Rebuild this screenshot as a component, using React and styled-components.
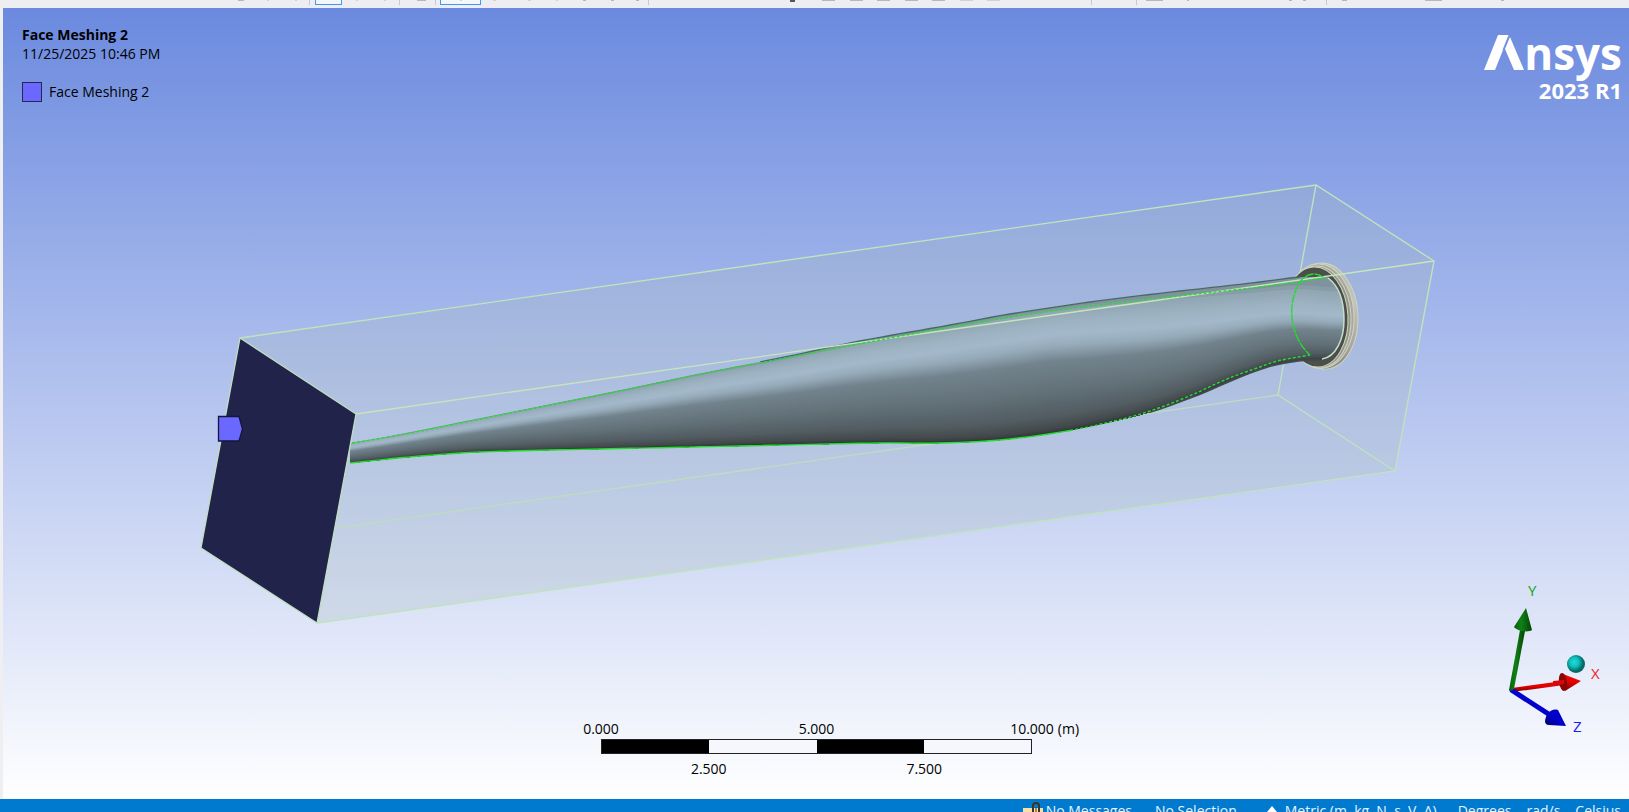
import React from "react";
import styled, { createGlobalStyle } from "styled-components";

const GlobalStyle = createGlobalStyle`
  * { box-sizing: border-box; }
  body { margin: 0; overflow: hidden; background: #efeff2; }
  body, button { font-family: "Open Sans", "Noto Sans", sans-serif; font-size: 14px; line-height: 20px; }
`;

const Window = styled.div`
  height: 100vh;
  display: flex;
  flex-direction: column;
`;

/* ---------- toolbar ---------- */

const Toolbar = styled.div`
  display: flex;
  flex: none;
  height: 8px;
  overflow: hidden;
  background: #eeeef2;
`;

const ToolButton = styled.button`
  flex: none;
  display: flex;
  justify-content: center;
  align-items: flex-start;
  width: ${(p) => p.$width}px;
  height: 5px;
  margin: 0 0 0 ${(p) => p.$gap || 0}px;
  padding: 0;
  border: ${(p) => (p.$active ? "1px solid #3d9bf7" : "0")};
  border-top: 0;
  background: ${(p) => (p.$active ? "#f3f6fb" : "transparent")};
`;

const Glyph = styled.span`
  width: ${(p) => p.$width}px;
  height: ${(p) => (p.$dark ? 2 : 1)}px;
  background: ${(p) => (p.$dark ? "#55555b" : p.$faint ? "#d0d0d5" : "#b7b7bd")};
`;

const Separator = styled.span`
  flex: none;
  width: 1px;
  height: 5px;
  margin-left: ${(p) => p.$gap || 0}px;
  background: #c6c8d4;
`;

const tools = [
  { name: "Select", gap: 227, w: 27, mark: 6 },
  { name: "Mode", w: 28, mark: 2, faint: true },
  { name: "Clipboard", w: 27, mark: 2, faint: true },
  { sep: true },
  { name: "Vertex", gap: 5, w: 27, active: true },
  { name: "Edge", w: 29, mark: 2, faint: true },
  { name: "Face", w: 28, mark: 2, faint: true },
  { sep: true },
  { name: "Body", gap: 8, w: 27, mark: 9 },
  { sep: true },
  { name: "Extend", gap: 4, w: 41, active: true, mark: 2, faint: true },
  { name: "Node", w: 27, mark: 3, faint: true },
  { name: "Element", gap: 8, w: 27, mark: 3, faint: true },
  { name: "Rotate", w: 27, mark: 2, faint: true },
  { name: "Pan", w: 28, mark: 3 },
  { name: "Zoom", w: 28, mark: 3 },
  { name: "Box Zoom", w: 22, mark: 3 },
  { sep: true },
  { name: "Fit", gap: 131, w: 24, mark: 5, dark: true },
  { name: "Look At", gap: 11, w: 27, mark: 13 },
  { name: "Front", w: 28, mark: 13 },
  { name: "Back", w: 27, mark: 13 },
  { name: "Left", w: 28, mark: 13 },
  { name: "Right", w: 27, mark: 13 },
  { name: "Top", w: 28, mark: 13, faint: true },
  { name: "Bottom", w: 27, mark: 13, faint: true },
  { sep: true, gap: 84 },
  { sep: true, gap: 44 },
  { name: "Section", gap: 4, w: 27, mark: 17 },
  { name: "Views", gap: 6, w: 27, mark: 2 },
  { name: "Probe", gap: 82, w: 14, mark: 3 },
  { name: "Label", w: 14, mark: 3 },
  { sep: true, gap: 15 },
  { name: "Triad", gap: 4, w: 27, mark: 5 },
  { name: "Legend", gap: 62, w: 27, mark: 17 },
  { name: "Ruler", gap: 42, w: 27, mark: 3 },
  { name: "More", gap: 108, w: 16, mark: 3, dark: true },
];

/* ---------- 3D view ---------- */

const Viewport = styled.main`
  position: relative;
  flex: 1;
  min-height: 0;
  margin-left: 3px;
  overflow: hidden;
  background: linear-gradient(#6b8adf, #ffffff);
  color: #000;
`;

const Scene = styled.svg`
  display: block;
  width: 100%;
  height: 100%;
`;

const Annotation = styled.header`
  position: absolute;
  top: 17px;
  left: 19px;
`;

const Title = styled.h1`
  margin: 0;
  font-size: 14px;
  line-height: 20px;
  font-weight: 700;
`;

const Stamp = styled.p`
  margin: 0;
  line-height: 18px;
`;

const LegendRow = styled.div`
  display: flex;
  align-items: center;
  gap: 7px;
  margin-top: 19px;
`;

const Swatch = styled.span`
  width: 20px;
  height: 20px;
  border: 1px solid #25264f;
  background: #6a68ff;
`;

const Brand = styled.div`
  position: absolute;
  top: 20px;
  right: 7px;
  display: flex;
  flex-direction: column;
  align-items: flex-end;
  color: #fff;
  font-weight: 700;
`;

const Wordmark = styled.div`
  display: flex;
  align-items: flex-start;
  font-size: 44px;
  line-height: 50px;
`;

const Peak = styled.svg`
  width: 40px;
  height: 36px;
  margin-top: 7px;
`;

const Release = styled.div`
  font-size: 22px;
  line-height: 24px;
`;

const Triad = styled.svg`
  position: absolute;
  right: 24px;
  bottom: 59px;
  width: 105px;
  height: 160px;
  font-size: 15px;
`;

const Ruler = styled.div`
  position: absolute;
  bottom: 20px;
  left: 50%;
  width: 431px;
  margin-left: -215px;
  display: flex;
  flex-direction: column;
  align-items: center;
`;

const TickRow = styled.div`
  display: grid;
  flex: none;
  grid-template-columns: repeat(${(p) => p.$count}, 1fr);
  width: ${(p) => (p.$wide ? "150%" : "100%")};
  justify-items: center;
`;

const Tick = styled.span`
  position: relative;
`;

const Unit = styled.span`
  position: absolute;
  left: 100%;
  margin-left: 4px;
`;

const RulerBar = styled.div`
  display: grid;
  grid-template-columns: repeat(4, 1fr);
  width: 100%;
  height: 15px;
  margin-bottom: 5px;
  border: 1px solid #222;
`;

const RulerCell = styled.span`
  background: ${(p) => (p.$filled ? "#000" : "#f6f7fc")};
`;

/* ---------- status bar ---------- */

const StatusBar = styled.footer`
  flex: none;
  display: flex;
  justify-content: flex-end;
  align-items: flex-start;
  gap: 15px;
  height: 13px;
  padding: 2px 8px 0 0;
  overflow: hidden;
  background: #007acf;
  color: #e8f4ff;
  white-space: nowrap;
`;

const StatusItem = styled.span`
  display: flex;
  gap: ${(p) => p.$gap || 3}px;
  margin-right: ${(p) => p.$after || 0}px;
`;

const StatusIcon = styled.svg`
  width: ${(p) => p.$width}px;
  height: 20px;
`;

/* ---------- blade geometry ---------- */

const topEdge = [
  [350, 443], [400, 434], [480, 418], [550, 404], [620, 390], [706, 372], [780, 358],
  [860, 341], [950, 325], [1010, 314], [1113, 299], [1260, 282], [1300, 277], [1328, 277],
];
const bottomEdge = [
  [350, 463], [420, 456], [480, 452], [600, 449], [740, 446], [880, 443], [940, 443],
  [1000, 440], [1067, 431], [1110, 422], [1147, 413], [1200, 394], [1230, 381],
  [1267, 367], [1297, 361], [1328, 359],
];
const seamTop = [
  [352, 443], [400, 435], [480, 419], [620, 391], [706, 373], [780, 359], [880, 340], [950, 327],
  [1010, 317], [1073, 308], [1160, 298], [1260, 287], [1325, 278],
];
const seamBottom = [
  [350, 463], [420, 456], [480, 452], [600, 449], [740, 446], [880, 443], [940, 443],
  [1000, 440], [1067, 431], [1110, 422], [1147, 412], [1187, 397], [1227, 379],
  [1260, 367], [1277, 361], [1310, 355],
];

/* cubic interpolation of y over x through the given points */
function heightAt(points, x) {
  let i = 0;
  while (i < points.length - 2 && x > points[i + 1][0]) i += 1;
  const p1 = points[i];
  const p2 = points[i + 1];
  const p0 = points[i - 1] || p1;
  const p3 = points[i + 2] || p2;
  const w = p2[0] - p1[0];
  const t = (x - p1[0]) / w;
  const m1 = ((p2[1] - p0[1]) / (p2[0] - p0[0])) * w;
  const m2 = ((p3[1] - p1[1]) / (p3[0] - p1[0])) * w;
  const t2 = t * t;
  const t3 = t2 * t;
  return (2 * t3 - 3 * t2 + 1) * p1[1] + (t3 - 2 * t2 + t) * m1 + (3 * t2 - 2 * t3) * p2[1] + (t3 - t2) * m2;
}

function range(from, to, step) {
  const out = [];
  for (let x = from; x < to; x += step) out.push(x);
  out.push(to);
  return out;
}

const toLine = (pts) => pts.map(([x, y]) => `${x.toFixed(1)} ${y.toFixed(1)}`).join(" L");
const curve = (points, from = points[0][0], to = points[points.length - 1][0]) =>
  "M" + toLine(range(from, to, 10).map((x) => [x, heightAt(points, x)]));

const shades = [
  [0, [128, 146, 158]], [0.03, [146, 167, 180]], [0.1, [156, 177, 192]], [0.21, [163, 185, 203]], [0.3, [150, 170, 185]],
  [0.42, [114, 131, 141]], [0.65, [99, 113, 121]], [0.85, [82, 93, 98]], [0.95, [67, 74, 76]], [1, [45, 50, 50]],
];

function shadeAt(s) {
  let i = 0;
  while (i < shades.length - 2 && s > shades[i + 1][0]) i += 1;
  const [a, ca] = shades[i];
  const [b, cb] = shades[i + 1];
  const t = (s - a) / (b - a);
  return `rgb(${ca.map((c, k) => Math.round(c + (cb[k] - c) * t)).join(",")})`;
}

const stations = range(340, 1348, 9);
const bands = range(0, 63, 1).map((i) => {
  const s = i / 64;
  const upper = stations.map((x) => {
    const power = 1 - 0.5 * Math.min(1, Math.max(0, (x - 1050) / 280));
    const top = heightAt(topEdge, Math.min(x, 1328));
    const bottom = heightAt(bottomEdge, Math.min(x, 1328));
    return [x, top + (bottom - top) * Math.pow(s, power)];
  });
  return { d: `M${toLine(upper)} L1348 480 L340 480 Z`, fill: shadeAt(s) };
});

const bladeOutline =
  curve(topEdge) +
  " C1339 286 1344 302 1344 320 C1344 339 1336 357 1322 359 L" +
  toLine(range(350, 1320, 10).reverse().map((x) => [x, heightAt(bottomEdge, x)])) +
  " Z";

function Model() {
  return (
    <Scene viewBox="3 8 1626 791" role="img" aria-label="Turbine blade inside its enclosure">
      <defs>
        <clipPath id="blade"><path d={bladeOutline} /></clipPath>
        <linearGradient id="rim" x1="0" y1="0" x2="0" y2="1">
          <stop offset="0" stopColor="#b9bdb2" />
          <stop offset="0.4" stopColor="#c4c2bc" />
          <stop offset="0.8" stopColor="#aaa49e" />
          <stop offset="1" stopColor="#85837b" />
        </linearGradient>
      </defs>

      <path d="M240 338 L1316 185 L1434 261 L1395 471 L317 623 L201 548 Z" fill="#a4b9b9" fillOpacity="0.25" />

      <g fill="none" stroke="#bfe3bd" strokeWidth="1.4">
        <path d="M240 338 L1316 185 L1434 261 L1395 471 L317 623" />
        <path d="M1316 185 L1278 395 L1395 471" />
        <path d="M336 528 L1278 395" stroke="#bedcc0" />
      </g>

      <g stroke="#cdd6c0">
        <ellipse cx="1323" cy="316" rx="35" ry="53" fill="url(#rim)" transform="rotate(-3 1323 316)" />
        <ellipse cx="1320" cy="316" rx="34" ry="52" fill="#aaa79e" transform="rotate(-3 1320 316)" />
        <ellipse cx="1318" cy="317" rx="33" ry="51" fill="#94968a" transform="rotate(-3 1318 317)" />
        <ellipse cx="1316" cy="317" rx="32" ry="50" fill="#4c4e4a" transform="rotate(-3 1316 317)" />
      </g>

      <g clipPath="url(#blade)">
        {bands.map((band, i) => <path key={i} d={band.d} fill={band.fill} />)}
      </g>
      <path d="M1328 278 C1339 286 1344 302 1344 320 C1344 339 1336 357 1322 359" fill="none" stroke="#c6dfca" strokeWidth="1.5" />
      <path d={curve(topEdge, 760, 1300)} fill="none" stroke="#486a66" strokeWidth="1.3" />
      <path d={curve(bottomEdge, 1150, 1320)} fill="none" stroke="#41494d" strokeWidth="2" />
      <path d="M356 414 L1434 261" stroke="#c6e5bd" strokeWidth="1.4" />

      <g fill="none" stroke="#22dd2e" strokeWidth="1.4">
        <path d={curve(seamTop)} strokeDasharray="3 2" />
        <path d={curve(seamBottom, 350, 1070)} />
        <path d={curve(seamBottom, 1070, 1310)} strokeDasharray="3 2" />
        <path d="M1323 277 C1316 272 1306 273 1300 282 C1286 304 1290 337 1310 355" strokeDasharray="9 1" />
      </g>

      <path d="M240 338 L356 414 L317 623 L201 548 Z" fill="#22234b" stroke="#bfe0bf" strokeWidth="1.3" />
      <path d="M218.500 416.500 H239 L242.500 429 L239 441 H218.500 Z" fill="#6a68ff" stroke="#15163a" strokeWidth="1.3" />
    </Scene>
  );
}

function AxisTriad() {
  return (
    <Triad viewBox="1500 580 105 160">
      <defs>
        <linearGradient id="green"><stop offset="0" stopColor="#075f07" /><stop offset="0.4" stopColor="#118016" /><stop offset="1" stopColor="#034503" /></linearGradient>
        <linearGradient id="red" x1="0" y1="0" x2="0" y2="1"><stop offset="0" stopColor="#e80808" /><stop offset="0.5" stopColor="#e00000" /><stop offset="1" stopColor="#760000" /></linearGradient>
        <linearGradient id="blue" x1="1" y1="0" x2="0" y2="1"><stop offset="0" stopColor="#0000b0" /><stop offset="0.5" stopColor="#0000d0" /><stop offset="1" stopColor="#000068" /></linearGradient>
        <radialGradient id="ball" cx="0.4" cy="0.4"><stop offset="0" stopColor="#18e0de" /><stop offset="0.5" stopColor="#10bfbd" /><stop offset="1" stopColor="#056968" /></radialGradient>
      </defs>
      <path d="M1512 688 L1563 681 L1564 685 L1512 692 Z" fill="url(#red)" />
      <path d="M1563 674 L1581 681 L1565 691 Z" fill="url(#red)" />
      <ellipse cx="1563" cy="682" rx="4" ry="9" fill="#8b0505" transform="rotate(-8 1563 682)" />
      <path d="M1553 681 L1564 680 L1564 684 L1553 686 Z" fill="#d90808" />
      <path d="M1509 689 L1513 688 L1550 712 L1547 716 L1510 692 Z" fill="url(#blue)" />
      <path d="M1545 721 C1546 714 1551 708 1558 710 L1566 726 L1549 725 C1546 725 1545 723 1545 721 Z" fill="url(#blue)" />
      <path d="M1509 690 L1520 630 L1525 631 L1514 689 Q1511 692 1509 690 Z" fill="url(#green)" />
      <path d="M1526 608 L1532 630 C1528 633 1517 631 1514 627 Z" fill="url(#green)" />
      <circle cx="1576" cy="664" r="9" fill="url(#ball)" />
      <text x="1528" y="596" fill="#12a512">Y</text>
      <text x="1591" y="679" fill="#f0202a">X</text>
      <text x="1573" y="732" fill="#2020e8">Z</text>
    </Triad>
  );
}

export default function App() {
  return (
    <Window>
      <GlobalStyle />
      <Toolbar>
        {tools.map((t, i) =>
          t.sep ? (
            <Separator key={i} $gap={t.gap} />
          ) : (
            <ToolButton key={i} type="button" aria-label={t.name} $width={t.w} $gap={t.gap} $active={t.active}>
              {t.mark && <Glyph $width={t.mark} $dark={t.dark} $faint={t.faint} />}
            </ToolButton>
          )
        )}
      </Toolbar>

      <Viewport>
        <Model />
        <Annotation>
          <Title>Face Meshing 2</Title>
          <Stamp>11/25/2025 10:46 PM</Stamp>
          <LegendRow><Swatch />Face Meshing 2</LegendRow>
        </Annotation>
        <Brand>
          <Wordmark aria-label="Ansys">
            <Peak viewBox="1484 35 40 36" fill="#fff">
              <path d="M1484 70 L1498 35 H1509 L1495 70 Z" />
              <path d="M1510 37 L1524 70 H1514 L1505 49 Z" />
              <path d="M1509 35 L1503 50" fill="none" stroke="#7592e1" />
            </Peak>
            nsys
          </Wordmark>
          <Release>2023 R1</Release>
        </Brand>
        <AxisTriad />
        <Ruler>
          <TickRow $count={3} $wide>
            <Tick>0.000</Tick>
            <Tick>5.000</Tick>
            <Tick>10.000<Unit>(m)</Unit></Tick>
          </TickRow>
          <RulerBar>
            <RulerCell $filled />
            <RulerCell />
            <RulerCell $filled />
            <RulerCell />
          </RulerBar>
          <TickRow $count={2}>
            <Tick>2.500</Tick>
            <Tick>7.500</Tick>
          </TickRow>
        </Ruler>
      </Viewport>

      <StatusBar>
        <StatusItem $after={8}>
          <StatusIcon $width={20} viewBox="0 0 20 20">
            <path d="M0 7 H20 V19 H0 Z" fill="#f6e3a4" />
            <path d="M10 14 V5 Q10 2 13 2 Q16 2 16 5 V14" fill="none" stroke="#3a3326" strokeWidth="2" />
            <path d="M13 6 V14" stroke="#3a3326" />
          </StatusIcon>
          No Messages
        </StatusItem>
        <StatusItem $after={15}>No Selection</StatusItem>
        <StatusItem $gap={8} $after={6}>
          <StatusIcon $width={10} viewBox="0 0 10 20"><path d="M5 5 L10 11 H7 V15 H3 V11 H0 Z" fill="#fff" /></StatusIcon>
          Metric (m, kg, N, s, V, A)
        </StatusItem>
        <StatusItem>Degrees</StatusItem>
        <StatusItem>rad/s</StatusItem>
        <StatusItem>Celsius</StatusItem>
      </StatusBar>
    </Window>
  );
}
